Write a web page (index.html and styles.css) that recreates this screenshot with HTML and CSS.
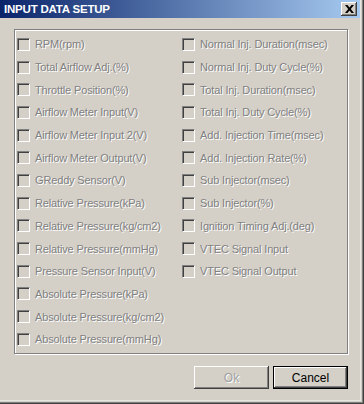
FILE: index.html
```html
<!DOCTYPE html>
<html lang="en">
  <head>
    <meta charset="UTF-8" />
    <meta name="viewport" content="width=device-width, initial-scale=1.0" />
    <link rel="stylesheet" href="styles.css">
    <title>INPUT DATA SETUP</title>
  </head>
  <body>
    <div class="window">
      <header class="titlebar">
        <h1>INPUT DATA SETUP</h1>
        <button class="close" title="Close">
          <svg width="9" height="8" viewBox="0 0 9 8">
            <path d="M0 0h2.5l2 2.6 2-2.6h2.5l-3.2 4 3.2 4h-2.5l-2-2.6-2 2.6h-2.5l3.2-4z" fill="#000" />
          </svg>
        </button>
      </header>
      <main class="client">
        <section class="group">
          <div class="col left">
            <label class="item"><span class="box"></span><span class="text">RPM(rpm)</span></label>
            <label class="item"><span class="box"></span><span class="text">Total Airflow Adj.(%)</span></label>
            <label class="item"><span class="box"></span><span class="text">Throttle Position(%)</span></label>
            <label class="item"><span class="box"></span><span class="text">Airflow Meter Input(V)</span></label>
            <label class="item"><span class="box"></span><span class="text">Airflow Meter Input 2(V)</span></label>
            <label class="item"><span class="box"></span><span class="text">Airflow Meter Output(V)</span></label>
            <label class="item"><span class="box"></span><span class="text">GReddy Sensor(V)</span></label>
            <label class="item"><span class="box"></span><span class="text">Relative Pressure(kPa)</span></label>
            <label class="item"><span class="box"></span><span class="text">Relative Pressure(kg/cm2)</span></label>
            <label class="item"><span class="box"></span><span class="text">Relative Pressure(mmHg)</span></label>
            <label class="item"><span class="box"></span><span class="text">Pressure Sensor Input(V)</span></label>
            <label class="item"><span class="box"></span><span class="text">Absolute Pressure(kPa)</span></label>
            <label class="item"><span class="box"></span><span class="text">Absolute Pressure(kg/cm2)</span></label>
            <label class="item"><span class="box"></span><span class="text">Absolute Pressure(mmHg)</span></label>
          </div>
          <div class="col right">
            <label class="item"><span class="box"></span><span class="text">Normal Inj. Duration(msec)</span></label>
            <label class="item"><span class="box"></span><span class="text">Normal Inj. Duty Cycle(%)</span></label>
            <label class="item"><span class="box"></span><span class="text">Total Inj. Duration(msec)</span></label>
            <label class="item"><span class="box"></span><span class="text">Total Inj. Duty Cycle(%)</span></label>
            <label class="item"><span class="box"></span><span class="text">Add. Injection Time(msec)</span></label>
            <label class="item"><span class="box"></span><span class="text">Add. Injection Rate(%)</span></label>
            <label class="item"><span class="box"></span><span class="text">Sub Injector(msec)</span></label>
            <label class="item"><span class="box"></span><span class="text">Sub Injector(%)</span></label>
            <label class="item"><span class="box"></span><span class="text">Ignition Timing Adj.(deg)</span></label>
            <label class="item"><span class="box"></span><span class="text">VTEC Signal Input</span></label>
            <label class="item"><span class="box"></span><span class="text">VTEC Signal Output</span></label>
          </div>
        </section>
        <footer class="buttons">
          <button class="btn ok" disabled>Ok</button>
          <button class="btn cancel">Cancel</button>
        </footer>
      </main>
    </div>
  </body>
</html>
```

FILE: styles.css
```css
* {
  margin: 0;
  padding: 0;
  box-sizing: border-box;
}

body {
  font-family: "Liberation Sans", Arial, sans-serif;
  font-size: 11px;
  background-color: #d4d0c8;
  overflow: hidden;
}

/* WINDOW */
.window {
  width: 364px;
  height: 404px;
  display: flex;
  flex-direction: column;
  background-color: #d4d0c8;
  border-right: 1px solid #404040;
  border-bottom: 1px solid #404040;
  box-shadow: inset -1px -1px 0 #808080, inset -2px -2px 0 #d4d0c8, inset -3px -3px 0 #e8e6e0;
  padding: 0 3px 3px 0;
}

.titlebar {
  height: 18px;
  display: flex;
  align-items: center;
  justify-content: space-between;
  padding: 0 4px 0 4px;
  background: linear-gradient(to right, #0a246a, #a6caf0);
}

.titlebar h1 {
  color: #fff;
  font-size: 11.5px;
  font-weight: bold;
  letter-spacing: -0.2px;
}

.close {
  width: 16px;
  height: 14px;
  display: flex;
  align-items: center;
  justify-content: center;
  background-color: #d4d0c8;
  border: none;
  box-shadow: inset -1px -1px 0 #404040, inset 1px 1px 0 #fff, inset -2px -2px 0 #808080;
  margin-right: -1px;
}

/* CLIENT AREA */
.client {
  flex: 1;
  display: flex;
  flex-direction: column;
  padding: 11px 12px 0 14px;
}

.group {
  height: 325px;
  display: flex;
  border: 1px solid #808080;
  box-shadow: inset 1px 1px 0 #fff, 1px 1px 0 #fff;
  padding: 3px 0 0 2px;
}

.col {
  display: flex;
  flex-direction: column;
}

.left {
  width: 165px;
}

.item {
  height: 22.7px;
  display: flex;
  align-items: center;
  gap: 5px;
}

.box {
  width: 13px;
  height: 13px;
  flex-shrink: 0;
  background-color: #d4d0c8;
  border-top: 1px solid #808080;
  border-left: 1px solid #808080;
  border-right: 1px solid #fff;
  border-bottom: 1px solid #fff;
  box-shadow: inset 1px 1px 0 #404040, inset -1px -1px 0 #d4d0c8;
}

.text {
  color: #808080;
  text-shadow: 1px 1px 0 #fff;
  white-space: nowrap;
  letter-spacing: -0.15px;
}

/* BUTTONS */
.buttons {
  display: flex;
  justify-content: flex-end;
  gap: 4px;
  margin-top: 12px;
}

.btn {
  width: 75px;
  height: 23px;
  font-family: inherit;
  font-size: 12px;
  background-color: #d4d0c8;
  border: none;
  box-shadow: inset -1px -1px 0 #404040, inset 1px 1px 0 #fff, inset -2px -2px 0 #808080;
}

.ok {
  color: #a0a0a0;
  text-shadow: 1px 1px 0 #fff;
}

.cancel {
  color: #000;
  border: 1px solid #000;
}
```
